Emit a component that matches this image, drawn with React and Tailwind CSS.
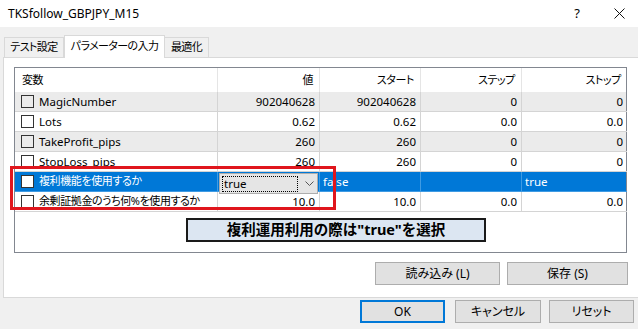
const COLS = 'grid grid-cols-[203px_102px_101px_101px_105px]';

const rows = [
  { name: 'MagicNumber', v: '902040628', s: '902040628', st: '0', sp: '0', bg: 'bg-[#ebebeb]' },
  { name: 'Lots', v: '0.62', s: '0.62', st: '0.0', sp: '0.0', bg: 'bg-white' },
  { name: 'TakeProfit_pips', v: '260', s: '260', st: '0', sp: '0', bg: 'bg-[#ebebeb]' },
  { name: 'StopLoss_pips', v: '260', s: '260', st: '0', sp: '0', bg: 'bg-white' },
];

function Check({ white }) {
  return <span className={`w-[13px] h-[13px] border border-[#333] shrink-0 ${white ? 'bg-white' : ''}`} />;
}

function Cell({ children, right, last }) {
  return (
    <div className={`h-[20px] flex items-center border-b border-[#d4d4d4] overflow-hidden whitespace-nowrap ${last ? '' : 'border-r'} ${right ? 'justify-end pr-[4px]' : 'pl-[3px]'}`}>
      {children}
    </div>
  );
}

function Btn({ children, w, primary }) {
  return (
    <div className={`${w} h-[23px] flex items-center justify-center bg-[#e1e1e1] text-[12px] text-black whitespace-nowrap ${primary ? 'border-2 border-[#0078d7]' : 'border border-[#adadad]'}`}>
      {children}
    </div>
  );
}

export default function App() {
  return (
    <div className="relative w-[638px] h-[329px] overflow-hidden bg-[#f0f0f0] text-[11.5px] text-black font-['Noto_Sans','Noto_Sans_CJK_JP',sans-serif] [font-feature-settings:'palt']">
      {/* title bar */}
      <div className="h-[27px] bg-white flex items-center pl-[8px]">
        <span className="text-[12px]">TKSfollow_GBPJPY_M15</span>
        <span className="ml-auto mr-[34px] text-[13px]">?</span>
        <svg width="11" height="11" viewBox="0 0 11 11" className="mr-[13px]">
          <path d="M0.5 0.5L10.5 10.5M10.5 0.5L0.5 10.5" stroke="#111" strokeWidth="1" />
        </svg>
      </div>

      {/* tabs */}
      <div className="flex items-end pt-[8px] pl-[4px] h-[30px] relative z-10 whitespace-nowrap text-[11px] tracking-[-0.6px]">
        <div className="w-[60px] h-[20px] border border-b-0 border-[#d9d9d9] bg-[#f0f0f0] flex items-center justify-center">テスト設定</div>
        <div className="w-[101px] h-[23px] border border-b-0 border-[#d9d9d9] bg-white flex items-center justify-center -mb-px pb-[2px]">パラメーターの入力</div>
        <div className="w-[44px] h-[20px] border border-b-0 border-l-0 border-[#d9d9d9] bg-[#f0f0f0] flex items-center justify-center">最適化</div>
      </div>

      {/* panel */}
      <div className="ml-[3px] w-[640px] h-[241px] bg-white border border-[#d9d9d9] pl-[10px] pt-[9px]">
        <div className="w-[613px] h-[186px] border border-[#828790] bg-white">
          <div className={`${COLS} h-[24px] text-[11px] tracking-[-0.4px]`}>
            <div className="flex items-center pl-[7px] border-r border-[#e5e5e5]">変数</div>
            <div className="flex items-center justify-end pr-[6px] border-r border-[#e5e5e5]">値</div>
            <div className="flex items-center justify-end pr-[6px] border-r border-[#e5e5e5]">スタート</div>
            <div className="flex items-center justify-end pr-[6px] border-r border-[#e5e5e5]">ステップ</div>
            <div className="flex items-center justify-end pr-[6px]">ストップ</div>
          </div>
          {rows.map((r) => (
            <div key={r.name} className={`${COLS} ${r.bg}`}>
              <Cell>
                <span className="pl-[3px] flex items-center gap-[5px]"><Check />{r.name}</span>
              </Cell>
              <Cell right>{r.v}</Cell>
              <Cell right>{r.s}</Cell>
              <Cell right>{r.st}</Cell>
              <Cell right last>{r.sp}</Cell>
            </div>
          ))}
          <div className={`${COLS} bg-[#0078d7] text-white`}>
            <div className="h-[20px] flex items-center pl-[6px] gap-[5px] border-r border-b border-[#3f9be3] whitespace-nowrap">
              <Check white />
              <span className="text-[11px] tracking-[-0.4px]">複利機能を使用するか</span>
            </div>
            <div className="h-[20px] relative border-r border-b border-[#3f9be3]">
              <div className="absolute left-[1px] top-[1px] w-[99px] h-[21px] bg-[#e5e5e5] border border-[#adadad] flex items-center text-black">
                <span className="ml-[2px] w-[76px] h-[16px] border border-dotted border-black flex items-center pl-[1px]">true</span>
                <svg width="9" height="5" viewBox="0 0 9 5" className="ml-[7px]">
                  <path d="M0.5 0.5L4.5 4.5L8.5 0.5" fill="none" stroke="#555" strokeWidth="1" />
                </svg>
              </div>
            </div>
            <div className="h-[20px] flex items-center pl-[3px] border-r border-b border-[#3f9be3]">false</div>
            <div className="h-[20px] border-r border-b border-[#3f9be3]" />
            <div className="h-[20px] flex items-center pl-[3px] border-b border-[#3f9be3]">true</div>
          </div>
          <div className={`${COLS} bg-white`}>
            <Cell>
              <span className="pl-[3px] flex items-center gap-[5px]">
                <Check />
                <span className="text-[11px] tracking-[-0.4px]">余剰証拠金のうち何%を使用するか</span>
              </span>
            </Cell>
            <Cell right>10.0</Cell>
            <Cell right>10.0</Cell>
            <Cell right>0.0</Cell>
            <Cell right last>0.0</Cell>
          </div>
          <div className="ml-[171px] mt-[6px] w-[300px] h-[24px] bg-[#dce6f2] border-2 border-[#1a1a1a] flex items-center justify-center font-bold text-[14.5px] [font-feature-settings:normal]">
            複利運用利用の際は"true"を選択
          </div>
        </div>
        <div className="flex gap-[7px] mt-[9px] ml-[361px]">
          <Btn w="w-[125px]">読み込み (L)</Btn>
          <Btn w="w-[121px]">保存 (S)</Btn>
        </div>
      </div>

      {/* bottom buttons */}
      <div className="flex mt-[2px] ml-[360px]">
        <Btn w="w-[85px]" primary>OK</Btn>
        <div className="ml-[10px]"><Btn w="w-[86px]">キャンセル</Btn></div>
        <div className="ml-[8px]"><Btn w="w-[85px]">リセット</Btn></div>
      </div>

      {/* red highlight */}
      <div className="absolute left-[10px] top-[166px] w-[326px] h-[44px] border-[3px] border-[#e0161d] pointer-events-none" />
    </div>
  );
}
